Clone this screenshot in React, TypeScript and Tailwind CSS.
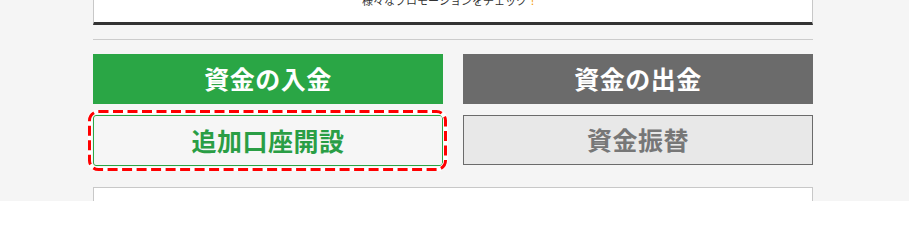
export default function App() {
  return (
    <div
      className="h-[201px] overflow-hidden bg-[#f5f5f5]"
      style={{ fontFamily: '"Noto Sans CJK JP", "Noto Sans", sans-serif' }}
    >
      <div className="ml-[93px] w-[720px]">
        {/* promo card, cut off at top */}
        <div className="-mt-[40px] flex h-[65px] items-end justify-center border-x border-b-[3px] border-x-[#c8c8c8] border-b-[#333333] bg-white pb-[16px] pr-[6px] text-[11px] leading-none text-[#333333]">
          様々なプロモーションをチェック<span className="text-[#f39800]">！</span>
        </div>

        <div className="mt-[14px] h-px bg-[#cccccc]" />

        <div className="mt-[14px] grid grid-cols-2 gap-x-[20px] gap-y-[11px]">
          <button className="flex h-[50px] items-center justify-center bg-[#2aa645] text-[25px] font-bold tracking-[0.5px] text-white">
            資金の入金
          </button>
          <button className="flex h-[50px] items-center justify-center bg-[#6b6b6b] text-[25px] font-bold tracking-[0.5px] text-white">
            資金の出金
          </button>
          <div className="relative">
            <button className="flex h-[51px] w-full items-center justify-center rounded-[3px] border border-[#2aa645] bg-[#f6f6f6] text-[25px] font-bold tracking-[0.5px] text-[#2a9e45]">
              追加口座開設
            </button>
            {/* highlight annotation */}
            <svg
              className="pointer-events-none absolute -left-[5px] -top-[5px]"
              width="360"
              height="61"
              viewBox="0 0 360 61"
            >
              <rect
                x="1.5"
                y="1.5"
                width="356"
                height="58"
                rx="9"
                fill="none"
                stroke="#ffffff"
                strokeWidth="4.5"
              />
              <rect
                x="1.5"
                y="1.5"
                width="356"
                height="58"
                rx="9"
                fill="none"
                stroke="#ff0000"
                strokeWidth="3"
                strokeDasharray="10 4.5"
              />
            </svg>
          </div>
          <button className="flex h-[50px] items-center justify-center border border-[#6b6b6b] bg-[#e8e8e8] text-[25px] font-bold tracking-[0.5px] text-[#777777]">
            資金振替
          </button>
        </div>

        <div className="mt-[21px] h-[40px] border border-[#c8c8c8] bg-white" />
      </div>
    </div>
  );
}
